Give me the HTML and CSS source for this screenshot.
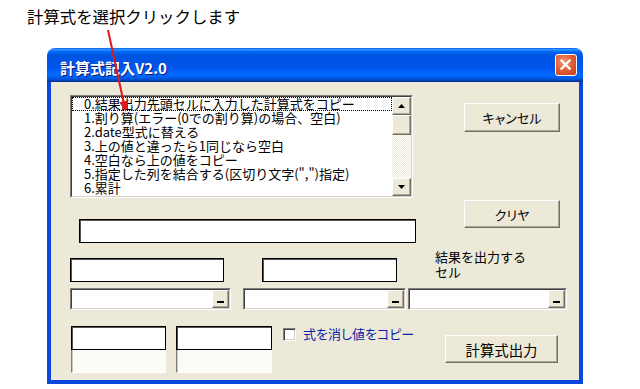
FILE: index.html
```html
<!DOCTYPE html>
<html lang="ja">
<head>
    <meta charset="UTF-8">
    <meta name="viewport" content="width=device-width, initial-scale=1.0">
    <title>計算式記入V2.0</title>
    <link rel="stylesheet" href="styles.css">
</head>
<body>
    <div class="note">計算式を選択クリックします</div>

    <svg class="arrow" viewBox="0 0 640 389" width="640" height="389">
        <line x1="108" y1="30" x2="124" y2="104" stroke="#e01818" stroke-width="2"/>
        <polygon points="126,112 128.4,100.3 119.2,102.3" fill="#e01818"/>
    </svg>

    <div class="window">
        <div class="titlebar">
            <span class="title">計算式記入V2.0</span>
            <span class="close">
                <svg viewBox="0 0 22 22" width="20" height="20">
                    <path d="M6 6 L15 15 M15 6 L6 15" stroke="#fff" stroke-width="2.4" stroke-linecap="square"/>
                </svg>
            </span>
        </div>

        <div class="frame">
            <div class="row row1">
                <div class="sunken listbox">
                    <div class="inner">
                        <ul class="items">
                            <li class="focus">0.結果出力先頭セルに入力した計算式をコピー</li>
                            <li>1.割り算(エラー(0での割り算)の場合、空白)</li>
                            <li>2.date型式に替える</li>
                            <li>3.上の値と違ったら1同じなら空白</li>
                            <li>4.空白なら上の値をコピー</li>
                            <li>5.指定した列を結合する(区切り文字(",")指定)</li>
                            <li>6.累計</li>
                        </ul>
                        <div class="vscroll">
                            <span class="sbtn">
                                <svg viewBox="0 0 7 4" width="7" height="4"><polygon points="3.5,0 7,4 0,4" fill="#000"/></svg>
                            </span>
                            <span class="sbtn thumb"></span>
                            <span class="track"></span>
                            <span class="sbtn">
                                <svg viewBox="0 0 7 4" width="7" height="4"><polygon points="0,0 7,0 3.5,4" fill="#000"/></svg>
                            </span>
                        </div>
                    </div>
                </div>
                <button class="btn cancel">キャンセル</button>
            </div>

            <div class="row row2">
                <div class="tb formula"></div>
                <button class="btn clear">クリヤ</button>
            </div>

            <div class="row row3">
                <div class="tb tb1"></div>
                <div class="tb tb2"></div>
                <div class="caption">結果を出力する<br>セル</div>
            </div>

            <div class="row row4">
                <div class="sunken combo c1"><div class="inner"><span class="drop"><i></i></span></div></div>
                <div class="sunken combo c2"><div class="inner"><span class="drop"><i></i></span></div></div>
                <div class="sunken combo c3"><div class="inner"><span class="drop"><i></i></span></div></div>
            </div>

            <div class="row row5">
                <div class="stack s1">
                    <div class="tb"></div>
                    <div class="off"></div>
                </div>
                <div class="stack s2">
                    <div class="tb"></div>
                    <div class="off"></div>
                </div>
                <label class="check">
                    <span class="box"></span>
                    <span class="check-label">式を消し値をコピー</span>
                </label>
                <button class="btn output">計算式出力</button>
            </div>
        </div>
    </div>
</body>
</html>
```

FILE: styles.css
```css
* { box-sizing: border-box; }
html, body { margin: 0; background: #fff; }
body { width: 640px; height: 389px; overflow: hidden; position: relative; color: #000; font-family: "Noto Sans CJK JP", sans-serif; font-size: 13px; }

.note { height: 48px; padding: 5px 0 0 27px; font-size: 16.4px; line-height: 22px; }
.arrow { position: absolute; left: 0; top: 0; z-index: 2; pointer-events: none; }

/* window frame */
.window { width: 536px; height: 336px; margin-left: 47px; display: flex; flex-direction: column; }
.titlebar { flex: none; height: 34px; border-radius: 8px 8px 0 0; display: flex; align-items: center; justify-content: space-between; padding: 0 6px 0 13px;
    background: linear-gradient(to bottom, #0058ee 0%, #3593ff 4%, #288eff 6%, #127dff 8%, #036ffc 10%, #0262ee 14%, #0057e5 20%, #0054e3 24%, #0055eb 56%, #005bf5 66%, #026afe 76%, #0062ef 86%, #0052d6 92%, #0040ab 96%, #003092 100%); }
.title { color: #fff; font-weight: bold; font-size: 15px; line-height: 20px; padding-top: 5px; text-shadow: 1px 1px 0 #0a1a7a; }
.close { width: 22px; height: 22px; margin-top: -1px; border: 1px solid #fff; border-radius: 3px; display: flex; align-items: center; justify-content: center;
    background: radial-gradient(circle at 40% 35%, #f09a7a 0%, #e2623a 45%, #c33a12 100%); }
.frame { flex: 1; min-height: 0; overflow: hidden; background: #ece9d8; border-style: solid; border-color: #0a47dc; border-width: 0 4px 4px 4px; }

.row { display: flex; align-items: flex-start; }

/* 3d borders */
.sunken { border: 1px solid; border-color: #808080 #fff #fff #808080; }
.sunken > .inner { height: 100%; border: 1px solid; border-color: #404040 #d4d0c8 #d4d0c8 #404040; background: #fff; display: flex; }
.btn { padding: 0; background: #ece9d8; color: #000; font-family: inherit; font-size: 13px; font-feature-settings: "palt"; border: 1px solid; border-color: #fff #716f64 #716f64 #fff; box-shadow: inset -1px -1px 0 #aca899; }
.tb { background: #fff; border: 1px solid #000; box-shadow: inset 1px 1px 0 #555; }

/* list box */
.row1 { margin-top: 13px; }
.listbox { margin-left: 19px; width: 343px; height: 103px; }
.items { list-style: none; margin: 0; padding: 0; flex: 1; }
.items li { height: 14px; line-height: 13px; padding-left: 12px; white-space: nowrap; }
.items li.focus { outline: 1px dotted #000; outline-offset: -1px; }
.vscroll { width: 19px; display: flex; flex-direction: column; }
.sbtn { height: 18px; background: #ece9d8; border: 1px solid; border-color: #fff #716f64 #716f64 #fff; box-shadow: inset -1px -1px 0 #aca899; display: flex; align-items: center; justify-content: center; }
.thumb { height: 20px; }
.track { flex: 1; background: repeating-conic-gradient(#fff 0 25%, #ece9d8 0 50%) 0 0 / 2px 2px; }
.cancel { margin: 8px 0 0 51px; width: 96px; height: 29px; }

.row2 { margin-top: 2px; }
.formula { margin: 19px 0 0 28px; width: 337px; height: 24px; }
.clear { margin-left: 48px; width: 96px; height: 28px; }

.row3 { margin-top: 7px; }
.tb1 { margin: 8px 0 0 19px; width: 154px; height: 24px; }
.tb2 { margin: 8px 0 0 38px; width: 135px; height: 24px; }
.caption { margin: -1px 0 0 38px; line-height: 15px; }

/* combo boxes */
.row4 { margin-top: 6px; }
.combo { height: 22px; }
.combo > .inner { justify-content: flex-end; }
.c1 { margin-left: 19px; width: 161px; }
.c2 { margin-left: 12px; width: 163px; }
.c3 { margin-left: 2px; width: 159px; }
.drop { width: 17px; height: 18px; background: #ece9d8; border: 1px solid; border-color: #fff #716f64 #716f64 #fff; box-shadow: inset -1px -1px 0 #aca899; display: flex; align-items: flex-end; justify-content: center; padding-bottom: 4px; }
.drop i { width: 7px; height: 2px; background: #000; }

/* bottom row */
.row5 { margin-top: 16px; }
.stack { display: flex; flex-direction: column; }
.stack .tb { height: 24px; }
.s1 { margin-left: 20px; width: 95px; }
.s2 { margin-left: 10px; width: 96px; }
.off { height: 23px; background: #fbfbf8; border-left: 1px solid #808080; border-right: 1px solid #fff; border-bottom: 1px solid #fff; box-shadow: inset 1px 0 0 #c9c6b8; }
.check { margin: 1px 0 0 11px; width: 162px; display: flex; align-items: center; }
.box { width: 13px; height: 13px; background: #fff; border: 1px solid; border-color: #808080 #fff #fff #808080; box-shadow: inset 1px 1px 0 #404040, inset -1px -1px 0 #d4d0c8; }
.check-label { margin-left: 7px; color: #0a1fa8; font-feature-settings: "palt"; line-height: 14px; }
.output { margin-top: 9px; width: 113px; height: 28px; font-size: 14.4px; font-feature-settings: normal; }
```
